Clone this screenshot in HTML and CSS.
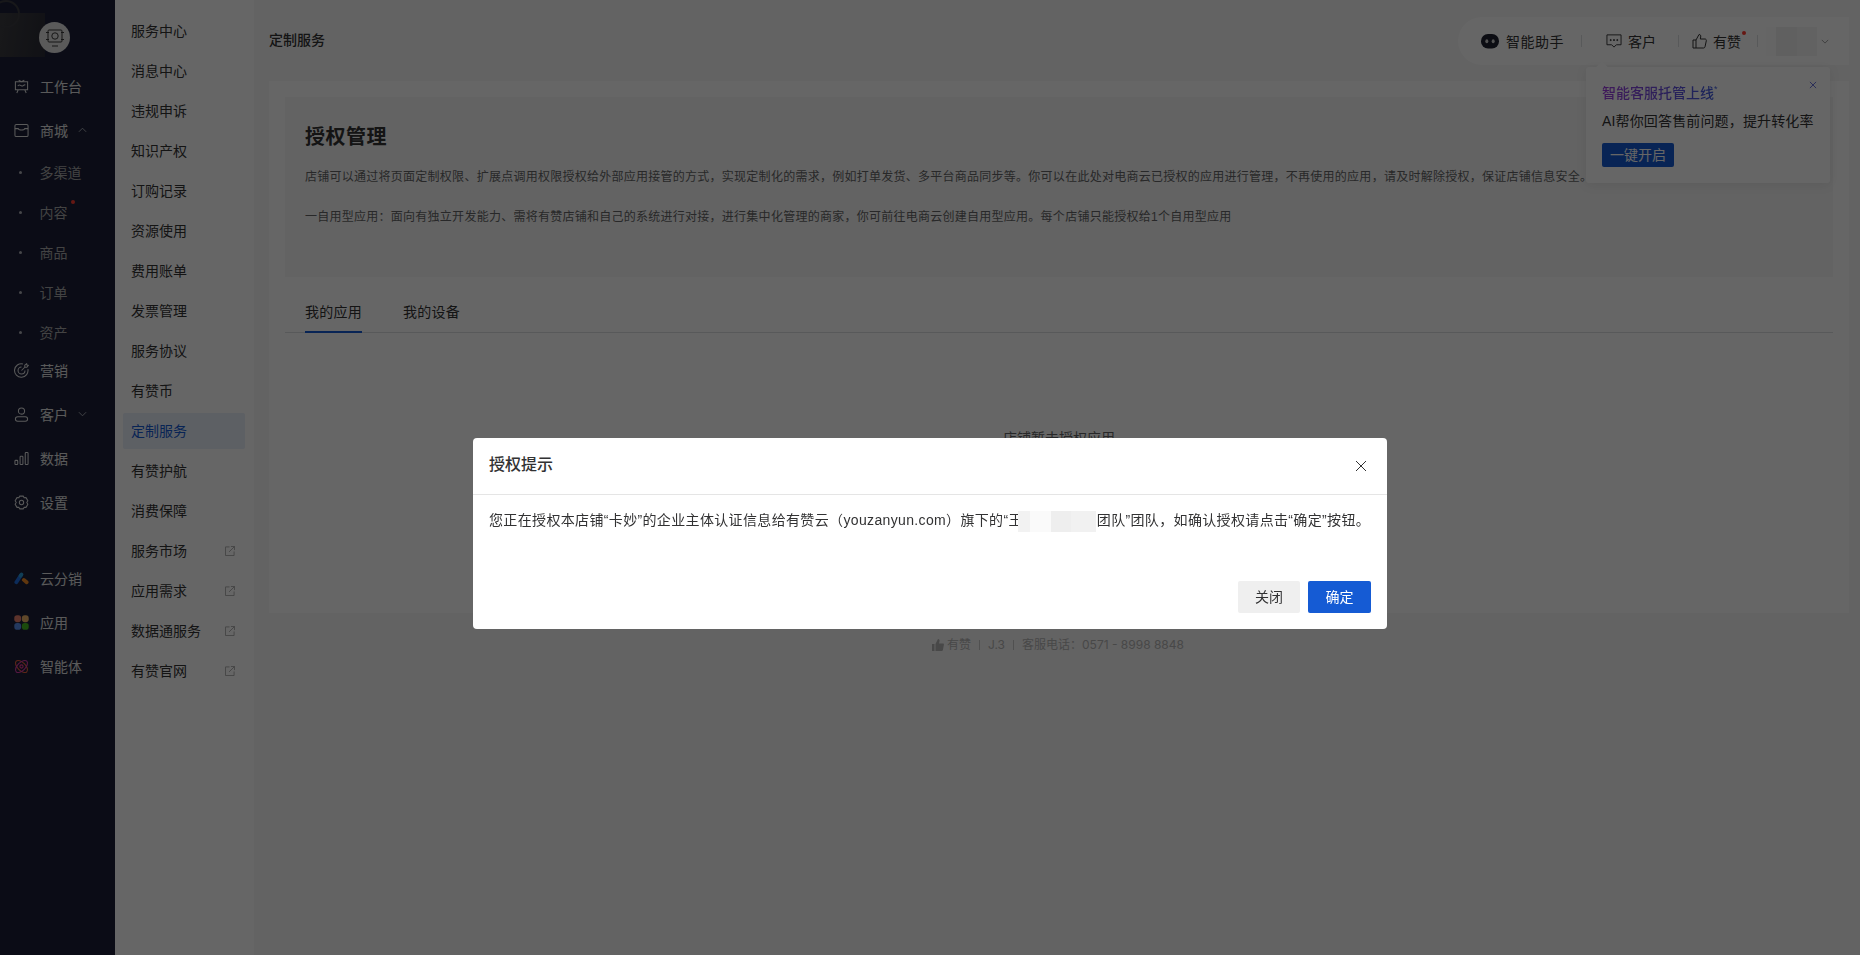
FILE: index.html
```html
<!DOCTYPE html>
<html lang="zh-CN">
<head>
<meta charset="utf-8">
<title>定制服务</title>
<link rel="stylesheet" href="styles.css">
</head>
<body>
<div class="app">
  <aside class="side">
    <div class="brand">
      <div class="brand-bg"></div>
      <div class="shop-logo">
        <svg width="22" height="20" viewBox="0 0 22 20" fill="none" stroke="#3a3a3a" stroke-width="1"><rect x="4" y="2" width="14" height="12" rx="1"/><circle cx="11" cy="8" r="3.200"/><path d="M2 4.500h3M17 4.500h3M2 11.500h3M17 11.500h3M8 18h6"/></svg>
      </div>
    </div>
    <nav class="menu">
      <a class="mi"><svg class="ic" viewBox="0 0 16 16" fill="none" stroke="currentColor" stroke-width="1.1"><path d="M5 1.200 8 3l3-1.800M1.500 3h13v8.500h-13zM4.500 11.500 3 15M11.500 11.500 13 15M4 7.500c1.200-1.500 2-1.500 3-.6s2 .9 3.200-.2 1.300-.7 1.800 0"/></svg><span>工作台</span></a>
      <a class="mi"><svg class="ic" viewBox="0 0 16 16" fill="none" stroke="currentColor" stroke-width="1.1"><rect x="1" y="1.500" width="14" height="13" rx="1.500"/><path d="M1 6h3.500c.4 2 6.600 2 7 0H15"/></svg><span>商城</span><svg class="chev" viewBox="0 0 10 6" fill="none" stroke="currentColor"><path d="M1 5l4-4 4 4"/></svg></a>
      <div class="sub">
        <a class="si"><i class="dot"></i><span>多渠道</span></a>
        <a class="si"><i class="dot"></i><span class="flag">内容</span></a>
        <a class="si"><i class="dot"></i><span>商品</span></a>
        <a class="si"><i class="dot"></i><span>订单</span></a>
        <a class="si"><i class="dot"></i><span>资产</span></a>
      </div>
      <a class="mi"><svg class="ic" viewBox="0 0 16 16" fill="none" stroke="currentColor" stroke-width="1.1"><path d="M14.800 6.500A7.200 7.200 0 1 1 9.500 1M11.700 8A3.700 3.700 0 1 1 8 4.300M8 8l4-4M11.500 4.500V2.300L13.500.8l.3 1.400 1.400.3-1.500 2z"/></svg><span>营销</span></a>
      <a class="mi"><svg class="ic" viewBox="0 0 16 16" fill="none" stroke="currentColor" stroke-width="1.1"><circle cx="8" cy="4.300" r="3.300"/><rect x="1.500" y="10.500" width="13" height="4.800" rx="2.400"/></svg><span>客户</span><svg class="chev" viewBox="0 0 10 6" fill="none" stroke="currentColor"><path d="M1 1l4 4 4-4"/></svg></a>
      <a class="mi"><svg class="ic" viewBox="0 0 16 16" fill="none" stroke="currentColor" stroke-width="1.1"><rect x="1" y="10" width="3" height="4.500" rx=".8"/><rect x="6.500" y="5.500" width="3" height="9" rx=".8"/><rect x="12" y="1.500" width="3" height="13" rx=".8"/></svg><span>数据</span></a>
      <a class="mi"><svg class="ic" viewBox="0 0 16 16" fill="none" stroke="currentColor" stroke-width="1.100"><path d="M6 1.200h4l.8 1.800 2-.2 2 3.400L13.600 8l1.200 1.800-2 3.400-2-.2-.8 1.800H6l-.8-1.800-2 .2-2-3.400L2.400 8 1.200 6.200l2-3.400 2 .2z" stroke-linejoin="round"/><circle cx="8" cy="8" r="2.300"/></svg><span>设置</span></a>
      <div class="apps">
        <a class="mi"><svg class="ic" viewBox="0 0 16 16" fill="none" stroke-linecap="round" stroke-width="4"><path d="M10.500 9.500 13.500 12" stroke="#f08a24"/><path d="M2.500 12 7 5" stroke="#1f6fe0"/><path d="M7 5 8 3.800" stroke="#2a9bd8"/></svg><span>云分销</span></a>
        <a class="mi"><svg class="ic" viewBox="0 0 16 16"><rect x=".3" y=".3" width="7.300" height="7.300" rx="3" fill="#e8806c"/><rect x="8.400" y=".3" width="7.300" height="7.300" rx="3" fill="#eeb36a"/><rect x=".3" y="8.400" width="7.300" height="7.300" rx="3" fill="#5b8fea"/><rect x="8.400" y="8.400" width="7.300" height="7.300" rx="3" fill="#45b81e"/></svg><span>应用</span></a>
        <a class="mi"><svg class="ic" viewBox="0 0 16 16" fill="none" stroke-width="1.200"><defs><linearGradient id="atom" x1="0" y1="0" x2="1" y2="1"><stop offset="0" stop-color="#f58a3a"/><stop offset="1" stop-color="#d030c8"/></linearGradient></defs><ellipse cx="8" cy="8" rx="8" ry="4.200" stroke="#e8603c" transform="rotate(45 8 8)"/><ellipse cx="8" cy="8" rx="8" ry="4.200" stroke="#d83aa8" transform="rotate(-45 8 8)"/><circle cx="8" cy="8" r="1.700" stroke="#e83a90"/></svg><span>智能体</span></a>
      </div>
    </nav>
  </aside>

  <nav class="nav2">
    <a class="ni">服务中心</a>
    <a class="ni">消息中心</a>
    <a class="ni">违规申诉</a>
    <a class="ni">知识产权</a>
    <a class="ni">订购记录</a>
    <a class="ni">资源使用</a>
    <a class="ni">费用账单</a>
    <a class="ni">发票管理</a>
    <a class="ni">服务协议</a>
    <a class="ni">有赞币</a>
    <a class="ni active">定制服务</a>
    <a class="ni">有赞护航</a>
    <a class="ni">消费保障</a>
    <a class="ni">服务市场<svg class="ext" viewBox="0 0 11 11" fill="none" stroke="currentColor"><path d="M5 1H.5v9.500H10V6M6.500.5h4v4M10.500.5 4.500 6.500"/></svg></a>
    <a class="ni">应用需求<svg class="ext" viewBox="0 0 11 11" fill="none" stroke="currentColor"><path d="M5 1H.5v9.500H10V6M6.500.5h4v4M10.500.5 4.500 6.500"/></svg></a>
    <a class="ni">数据通服务<svg class="ext" viewBox="0 0 11 11" fill="none" stroke="currentColor"><path d="M5 1H.5v9.500H10V6M6.500.5h4v4M10.500.5 4.500 6.500"/></svg></a>
    <a class="ni">有赞官网<svg class="ext" viewBox="0 0 11 11" fill="none" stroke="currentColor"><path d="M5 1H.5v9.500H10V6M6.500.5h4v4M10.500.5 4.500 6.500"/></svg></a>
  </nav>

  <main class="main">
    <header class="top">
      <div class="crumb">定制服务</div>
      <div class="pill">
        <span class="tool tool-ai"><svg class="robot" viewBox="0 0 18 18"><rect y="2" width="18" height="14.500" rx="7" fill="#1e2230"/><ellipse cx="5.800" cy="9.200" rx="1.500" ry="2" fill="#d0d0d0"/><ellipse cx="12.200" cy="9.200" rx="1.500" ry="2" fill="#d0d0d0"/></svg>智能助手</span>
        <i class="sep"></i>
        <span class="tool tool-kf"><svg class="tico" viewBox="0 0 17 16" fill="none" stroke="#323233" stroke-width="1"><path d="M1 1.500h15v10.500h-5l-2.500 2.500L6 12H1z"/><circle cx="5" cy="7" r=".6" fill="#323233"/><circle cx="8.500" cy="7" r=".6" fill="#323233"/><circle cx="12" cy="7" r=".6" fill="#323233"/></svg>客户</span>
        <i class="sep"></i>
        <span class="tool tool-yz"><svg class="tico" viewBox="0 0 15 16" fill="none" stroke="#323233" stroke-width="1"><path d="M4 7 7 1.500c1.500 0 2 1 1.700 2.500L8.300 6H13c1 0 1.500.8 1.300 1.800l-1.300 6c-.2.700-.6 1.200-1.500 1.200H4zM4 7H1v8h3"/></svg><span class="flag-top">有赞</span></span>
        <i class="sep"></i>
        <span class="avatar"></span>
        <svg class="top-chev" viewBox="0 0 10 6" fill="none" stroke="#8a8a8a"><path d="M1 1l4 4 4-4"/></svg>
      </div>
      <div class="tip">
        <i class="tip-arrow"></i>
        <svg class="tip-x" viewBox="0 0 9 9" fill="none" stroke="#5a63d8"><path d="M1 1l7 7M8 1 1 8"/></svg>
        <div class="tip-title">智能客服托管上线<sup>*</sup></div>
        <div class="tip-text">AI帮你回答售前问题，提升转化率</div>
        <button class="tip-btn">一键开启</button>
      </div>
    </header>

    <section class="card">
      <div class="hero">
        <h1>授权管理</h1>
        <p>店铺可以通过将页面定制权限、扩展点调用权限授权给外部应用接管的方式，实现定制化的需求，例如打单发货、多平台商品同步等。你可以在此处对电商云已授权的应用进行管理，不再使用的应用，请及时解除授权，保证店铺信息安全。</p>
        <p>一自用型应用：面向有独立开发能力、需将有赞店铺和自己的系统进行对接，进行集中化管理的商家，你可前往电商云创建自用型应用。每个店铺只能授权给1个自用型应用</p>
      </div>
      <div class="tabs">
        <a class="tab on">我的应用</a>
        <a class="tab">我的设备</a>
      </div>
      <div class="empty">店铺暂未授权应用</div>
    </section>

    <footer class="foot">
      <svg class="foot-ic" viewBox="0 0 12 12" fill="#b4b4b4"><path d="M0 5h2.500v7H0zM3.500 5 6 0c1.300 0 1.800 1 1.500 2L7 4.500h4c.7 0 1 .6.900 1.200l-1 5.300c-.1.600-.5 1-1.100 1H3.500z"/></svg>
      <span>有赞</span><i class="fsep"></i><span>J.3</span><i class="fsep"></i><span>客服电话：0571 - 8998 8848</span>
    </footer>
  </main>
</div>

<div class="overlay">
  <div class="modal">
    <div class="m-head">
      <span class="m-title">授权提示</span>
      <svg class="m-x" viewBox="0 0 12 12" fill="none" stroke="#323233" stroke-width="1"><path d="M1 1l10 10M11 1 1 11"/></svg>
    </div>
    <div class="m-body">您正在授权本店铺“卡妙”的企业主体认证信息给有赞云（youzanyun.com）旗下的“王<span class="redact"></span>团队”团队，如确认授权请点击“确定”按钮。</div>
    <div class="m-foot">
      <button class="btn close">关闭</button>
      <button class="btn primary">确定</button>
    </div>
  </div>
</div>
</body>
</html>
```
FILE: styles.css
```css
* { box-sizing: border-box; }
html, body { margin: 0; height: 100%; overflow: hidden; }
body { font-family: "Liberation Sans", "Noto Sans CJK SC", sans-serif; font-size: 14px; color: #323233; background: #f7f7f7; }
a { display: flex; align-items: center; }
i { display: block; }

.app { display: flex; height: 955px; }

.side { width: 115px; flex: none; background: #1c2039; }
.brand { height: 69px; position: relative; padding: 22px 0 0 39px; }
.brand-bg { position: absolute; left: 0; top: 13px; width: 45px; height: 44px; background: linear-gradient(100deg, #3e3e42, #2a2b36); }
.brand-bg::before { content: ""; position: absolute; left: -8px; top: -13px; width: 24px; height: 24px; border: 2px solid #3c3c42; border-radius: 50%; }
.shop-logo { position: relative; width: 31px; height: 31px; border-radius: 50%; background: #e0e0e0; display: flex; align-items: center; justify-content: center; }
.menu { display: flex; flex-direction: column; }
.mi { height: 36px; margin-bottom: 8px; padding: 0 0 2px 14px; color: #e0e0e0; }
.mi > span { margin-left: 11px; }
.ic { width: 15px; height: 15px; flex: none; }
.chev { width: 9px; height: 6px; margin-left: 10px; color: #b0b2b8; }
.sub { margin-top: -4px; }
.si { height: 40px; padding: 0 0 2px 19px; color: #a8a8a8; }
.dot { width: 3px; height: 3px; border-radius: 50%; background: #b0b2b8; margin-right: 17.5px; }
.flag { position: relative; }
.flag::after { content: ""; position: absolute; right: -7px; top: -2px; width: 4px; height: 4px; border-radius: 50%; background: #ff3b30; }
.apps { margin-top: 32px; }

.nav2 { width: 139px; flex: none; background: #fff; padding: 13px 9px 0 8px; display: flex; flex-direction: column; }
.ni { height: 36px; margin-bottom: 4px; padding: 0 10px 2px 8px; border-radius: 2px; position: relative; }
.ni.active { color: #155bd4; background: #e8effa; }
.ext { width: 10px; height: 10px; position: absolute; right: 10px; top: 13px; color: #a8a8a8; }

.main { flex: 1; min-width: 0; background: #f7f7f7; display: flex; flex-direction: column; }
.top { height: 81px; flex: none; display: flex; justify-content: space-between; padding: 17px 11px 0 15px; position: relative; }
.crumb { line-height: 47px; font-weight: 500; }
.pill { height: 48px; width: 391px; background: #fff; border-radius: 24px 0 0 24px; display: flex; align-items: center; padding-left: 23px; }
.tool { display: flex; align-items: center; }
.tool-ai { letter-spacing: .5px; }
.robot { width: 18px; height: 18px; margin-right: 7px; }
.tico { width: 16px; height: 16px; margin-right: 6px; }
.tool-yz .tico { width: 15px; }
.sep { width: 1px; height: 12px; background: #dcdee0; }
.tool-ai + .sep { margin: 0 24px 0 17px; }
.tool-kf + .sep { margin: 0 13px 0 22px; }
.tool-yz + .sep { margin: 0 8px 0 16px; }
.flag-top { position: relative; }
.flag-top::after { content: ""; position: absolute; right: -5px; top: 0; width: 4px; height: 4px; border-radius: 50%; background: #ff3b30; }
.avatar { width: 51px; height: 29px; background: linear-gradient(90deg, #fcfcfc 0 20%, #f1f1f1 20% 60%, #f4f4f4 60%); }
.top-chev { width: 8px; height: 5px; margin-left: 4px; }

.tip { position: absolute; left: 1332px; top: 67px; width: 244px; height: 116px; background: #fff; border-radius: 3px; padding: 16px 16px 0; box-shadow: 0 2px 12px rgba(0,0,0,.08); z-index: 2; }
.tip-arrow { position: absolute; left: 12px; top: -4px; width: 8px; height: 8px; background: #fff; transform: rotate(45deg); }
.tip-x { position: absolute; right: 13px; top: 14px; width: 8px; height: 8px; }
.tip-title { line-height: 20px; background: linear-gradient(90deg, #a03ee0, #3a5fe0); -webkit-background-clip: text; background-clip: text; color: transparent; width: 120px; font-weight: 500; }
.tip-title sup { font-size: 9px; line-height: 0; }
.tip-text { line-height: 20px; margin-top: 8px; letter-spacing: .15px; }
.tip-btn { display: block; margin-top: 12px; width: 72px; height: 24px; padding: 0 0 2px; border: 0; border-radius: 2px; background: #155bd4; color: #fff; font: inherit; }

.card { margin: 0 11px 0 15px; background: #fff; height: 532px; flex: none; padding: 16px 16px 0; overflow: hidden; }
.hero { height: 180px; background: #f7f7f7; padding: 23px 20px 0; }
.hero h1 { margin: 0; font-size: 20px; font-weight: 700; line-height: 34px; color: #323233; letter-spacing: .5px; }
.hero p { margin: 0; font-size: 12px; line-height: 20px; color: #646566; letter-spacing: .26px; white-space: nowrap; }
.hero h1 + p { margin-top: 13px; }
.hero p + p { margin-top: 20px; }
.tabs { display: flex; gap: 41px; border-bottom: 1px solid #dcdee0; padding: 0 20px; height: 56px; align-items: flex-end; }
.tab { height: 40px; border-bottom: 2px solid transparent; margin-bottom: -1px; letter-spacing: .25px; padding-bottom: 2px; }
.tab.on { border-bottom-color: #155bd4; }
.empty { text-align: center; margin-top: 95px; color: #646566; line-height: 20px; }

.foot { margin-top: 22px; padding-left: 678px; display: flex; align-items: center; font-family: Inter, "Noto Sans CJK SC", sans-serif; font-size: 12px; line-height: 20px; color: #b4b4b4; }
.foot-ic { width: 12px; height: 12px; margin-right: 3px; }
.fsep { width: 1px; height: 10px; background: #c8c8c8; margin: 0 8px; }

.overlay { position: fixed; inset: 0; background: rgba(0,0,0,.6); display: flex; justify-content: center; align-items: flex-start; padding-top: 438px; z-index: 10; }
.modal { width: 914px; height: 191px; background: #fff; border-radius: 4px; display: flex; flex-direction: column; }
.m-head { height: 57px; flex: none; border-bottom: 1px solid #e5e5e5; padding: 0 20px 0 16px; display: flex; align-items: center; justify-content: space-between; }
.m-title { font-size: 16px; font-weight: 500; color: #323233; line-height: 22px; padding-bottom: 2px; }
.m-x { width: 12px; height: 12px; }
.m-body { padding: 15px 16px 0; line-height: 20px; color: #323233; white-space: nowrap; flex: 1; letter-spacing: .35px; }
.redact { display: inline-block; width: 78px; height: 21px; vertical-align: middle; background: linear-gradient(90deg, #f2f2f2 0 16%, #fafafa 16% 42%, #eeeeee 42% 68%, #f1f1f1 68%); margin: 0 1px 0 -5px; }
.m-foot { display: flex; justify-content: flex-end; gap: 8px; padding: 0 16px 16px; }
.btn { width: 63px; height: 32px; padding: 0 0 2px; border: 0; border-radius: 2px; background: #efefef; color: #323233; font: inherit; }
.btn.close { width: 62px; }
.btn.primary { background: #155bd4; color: #fff; }
```
